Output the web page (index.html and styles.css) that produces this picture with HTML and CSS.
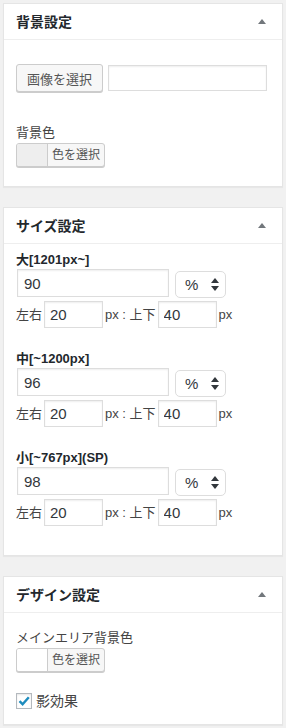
FILE: index.html
```html
<!DOCTYPE html>
<html lang="ja">
<head>
    <meta charset="UTF-8">
    <meta name="viewport" content="width=device-width, initial-scale=1.0">
    <title>設定</title>
    <link rel="stylesheet" href="styles.css">
</head>
<body>

    <!-- 背景設定 -->
    <div class="postbox">
        <div class="hndle">
            <h2>背景設定</h2>
            <span class="toggle"></span>
        </div>
        <div class="inside bg-inside">
            <div class="image-row">
                <button class="button">画像を選択</button>
                <input type="text" class="image-url">
            </div>
            <p class="label">背景色</p>
            <button class="color-btn"><span class="swatch swatch-grey"></span><span class="color-text">色を選択</span></button>
        </div>
    </div>

    <!-- サイズ設定 -->
    <div class="postbox">
        <div class="hndle">
            <h2>サイズ設定</h2>
            <span class="toggle"></span>
        </div>
        <div class="inside size-inside">
            <div class="size-group">
                <p class="size-label">大[1201px~]</p>
                <div class="width-row">
                    <input type="text" class="width-input" value="90">
                    <div class="select"><span>%</span>
                        <svg width="8" height="13" viewBox="0 0 8 13"><path d="M4 0L8 5H0Z" fill="#32373c"/><path d="M4 13L8 8H0Z" fill="#32373c"/></svg>
                    </div>
                </div>
                <div class="pad-row">
                    <span>左右</span><input type="text" class="pad-input" value="20"><span>px : 上下</span><input type="text" class="pad-input" value="40"><span>px</span>
                </div>
            </div>
            <div class="size-group">
                <p class="size-label">中[~1200px]</p>
                <div class="width-row">
                    <input type="text" class="width-input" value="96">
                    <div class="select"><span>%</span>
                        <svg width="8" height="13" viewBox="0 0 8 13"><path d="M4 0L8 5H0Z" fill="#32373c"/><path d="M4 13L8 8H0Z" fill="#32373c"/></svg>
                    </div>
                </div>
                <div class="pad-row">
                    <span>左右</span><input type="text" class="pad-input" value="20"><span>px : 上下</span><input type="text" class="pad-input" value="40"><span>px</span>
                </div>
            </div>
            <div class="size-group">
                <p class="size-label">小[~767px](SP)</p>
                <div class="width-row">
                    <input type="text" class="width-input" value="98">
                    <div class="select"><span>%</span>
                        <svg width="8" height="13" viewBox="0 0 8 13"><path d="M4 0L8 5H0Z" fill="#32373c"/><path d="M4 13L8 8H0Z" fill="#32373c"/></svg>
                    </div>
                </div>
                <div class="pad-row">
                    <span>左右</span><input type="text" class="pad-input" value="20"><span>px : 上下</span><input type="text" class="pad-input" value="40"><span>px</span>
                </div>
            </div>
        </div>
    </div>

    <!-- デザイン設定 -->
    <div class="postbox">
        <div class="hndle">
            <h2>デザイン設定</h2>
            <span class="toggle"></span>
        </div>
        <div class="inside design-inside">
            <p class="label">メインエリア背景色</p>
            <button class="color-btn"><span class="swatch"></span><span class="color-text">色を選択</span></button>
            <label class="check-row">
                <span class="checkbox">
                    <svg width="14" height="14" viewBox="0 0 14 14"><path d="M2.5 7.2L5.6 10.2L11.8 3.2" fill="none" stroke="#1e8cbe" stroke-width="2.4"/></svg>
                </span>
                影効果
            </label>
        </div>
    </div>

</body>
</html>
```

FILE: styles.css
```css
body {
    font-family: "Liberation Sans", "Noto Sans CJK JP", sans-serif;
    background-color: #f1f1f1;
    color: #444;
    margin: 0;
    padding: 3px 3px 0;
}
.postbox {
    background-color: #fff;
    border: 1px solid #e5e5e5;
    box-shadow: 0 1px 1px rgba(0, 0, 0, 0.04);
    margin-bottom: 20px;
}
.hndle {
    height: 35px;
    border-bottom: 1px solid #eee;
    display: flex;
    align-items: center;
    justify-content: space-between;
    padding: 0 16px 0 12px;
}
.hndle h2 {
    margin: 0;
    font-size: 14px;
    line-height: 18px;
    font-weight: bold;
    color: #23282d;
}
.toggle {
    width: 0;
    height: 0;
    border-left: 4px solid transparent;
    border-right: 4px solid transparent;
    border-bottom: 5px solid #72777c;
}
.inside {
    padding: 0 12px;
}
p {
    margin: 0;
}
.label {
    font-size: 13px;
    line-height: 18px;
    color: #444;
}
.bg-inside {
    padding-top: 24px;
    padding-bottom: 19px;
}
.image-row {
    display: flex;
    align-items: flex-start;
    gap: 5px;
    height: 28px;
    margin-bottom: 32px;
}
.button {
    height: 28px;
    width: 87px;
    padding: 0;
    background-color: #f7f7f7;
    border: 1px solid #ccc;
    border-radius: 3px;
    box-shadow: 0 1px 0 #ccc;
    color: #555;
    font-family: inherit;
    font-size: 13px;
}
.image-url {
    width: 159px;
    height: 26px;
    box-sizing: border-box;
    border: 1px solid #ddd;
    box-shadow: inset 0 1px 2px rgba(0, 0, 0, 0.07);
    margin: 1px 0 0;
    padding: 0 6px;
}
.color-btn {
    display: flex;
    height: 24px;
    width: 89px;
    padding: 0;
    margin-top: 1px;
    background-color: #f7f7f7;
    border: 1px solid #ccc;
    border-radius: 3px;
    box-shadow: 0 1px 0 #ccc;
    overflow: hidden;
    font-family: inherit;
}
.swatch {
    width: 30px;
    height: 100%;
    background-color: #fff;
    border-right: 1px solid #ccc;
}
.swatch-grey {
    background-color: #eee;
}
.color-text {
    flex: 1;
    font-size: 12px;
    line-height: 22px;
    color: #555;
}
.size-inside {
    padding-top: 7px;
    padding-bottom: 29px;
}
.size-group {
    margin-bottom: 22px;
}
.size-group:last-child {
    margin-bottom: 0;
}
.size-label {
    font-size: 13px;
    font-weight: bold;
    line-height: 18px;
    color: #23282d;
}
.width-row {
    display: flex;
    align-items: flex-start;
    gap: 6px;
    height: 29px;
}
input {
    font-family: inherit;
    color: #32373c;
}
.width-input {
    width: 152px;
    height: 28px;
    box-sizing: border-box;
    border: 1px solid #ddd;
    box-shadow: inset 0 1px 2px rgba(0, 0, 0, 0.07);
    font-size: 15px;
    padding: 0 6px;
    margin: 0 0 0 1px;
}
.select {
    width: 51px;
    height: 27px;
    box-sizing: border-box;
    border: 1px solid #ddd;
    border-radius: 5px;
    margin-top: 2px;
    display: flex;
    align-items: center;
    justify-content: space-between;
    padding: 0 6px 0 9px;
    font-size: 15px;
    color: #32373c;
}
.pad-row {
    display: flex;
    align-items: center;
    gap: 2px;
    height: 27px;
    margin-top: 3px;
    font-size: 13px;
    line-height: 18px;
    color: #444;
}
.pad-input {
    width: 59px;
    height: 27px;
    box-sizing: border-box;
    border: 1px solid #ddd;
    box-shadow: inset 0 1px 2px rgba(0, 0, 0, 0.07);
    font-size: 15px;
    padding: 0 5px;
    margin: 0;
}
.design-inside {
    padding-top: 16px;
    padding-bottom: 15px;
}
.check-row {
    display: flex;
    align-items: center;
    gap: 4px;
    height: 16px;
    margin-top: 21px;
    font-size: 14px;
    line-height: 16px;
    color: #444;
}
.checkbox {
    width: 16px;
    height: 16px;
    box-sizing: border-box;
    border: 1px solid #b4b9be;
    box-shadow: inset 0 1px 2px rgba(0, 0, 0, 0.1);
    display: flex;
    align-items: center;
    justify-content: center;
}
```
